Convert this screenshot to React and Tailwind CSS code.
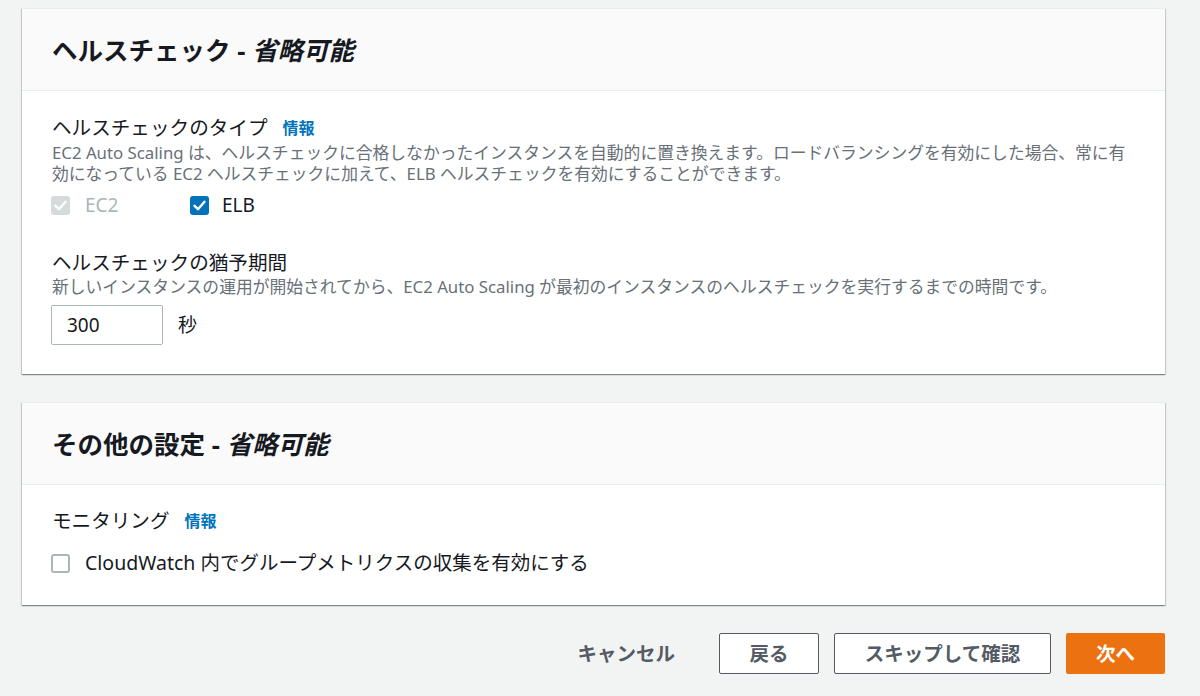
import React from 'react'

const cardShadow =
  'shadow-[0_1px_1px_0_rgba(0,28,36,0.3),1px_1px_1px_0_rgba(0,28,36,0.15),-1px_1px_1px_0_rgba(0,28,36,0.15)]'

function Check({ checked, disabled }) {
  if (!checked) {
    return <span className="w-[19px] h-[19px] rounded-[3px] border-2 border-[#aab7b8] bg-white shrink-0" />
  }
  return (
    <span
      className={`w-[19px] h-[19px] rounded-[3px] shrink-0 flex items-center justify-center ${
        disabled ? 'bg-[#d5dbdb]' : 'bg-[#0073bb]'
      }`}
    >
      <svg width="19" height="19" viewBox="0 0 19 19" fill="none">
        <polyline points="4.5,9.8 8,13.2 14.5,5.8" stroke="white" strokeWidth="2.4" strokeLinecap="round" strokeLinejoin="round" />
      </svg>
    </span>
  )
}

function Card({ title, children }) {
  return (
    <section className={`bg-white border-t border-[#eaeded] ${cardShadow}`}>
      <div className="h-[82px] bg-[#fafafa] border-b border-[#eaeded] px-[30px] flex items-center">
        <h2 className="text-[25.5px] font-bold text-[#16191f] leading-[30px]">
          {title} - <i>省略可能</i>
        </h2>
      </div>
      {children}
    </section>
  )
}

function Label({ children, info }) {
  return (
    <div className="flex items-center h-[24px]">
      <span className="text-[19.6px] text-[#16191f] leading-[24px]">{children}</span>
      {info && <a className="ml-[15px] text-[16px] font-bold text-[#0073bb] leading-[24px]">情報</a>}
    </div>
  )
}

export default function App() {
  return (
    <div className="min-h-[696px] bg-[#f2f3f3] pt-[8px] pl-[22px] pr-[35px] font-['Noto_Sans','Noto_Sans_CJK_JP',sans-serif]">
      <Card title="ヘルスチェック">
        <div className="px-[30px] pt-[25px] pb-[29px]">
          <Label info>ヘルスチェックのタイプ</Label>
          <div className="mt-[2px] text-[16.8px] leading-[21px] text-[#687078] whitespace-nowrap">
            <p>EC2 Auto Scaling は、ヘルスチェックに合格しなかったインスタンスを自動的に置き換えます。ロードバランシングを有効にした場合、常に有</p>
            <p>効になっている EC2 ヘルスチェックに加えて、ELB ヘルスチェックを有効にすることができます。</p>
          </div>
          <div className="mt-[9px] h-[24px] flex items-center -ml-[1px]">
            <div className="flex items-center w-[139px]">
              <Check checked disabled />
              <span className="ml-[15px] text-[19px] text-[#aab7b8]">EC2</span>
            </div>
            <div className="flex items-center">
              <Check checked />
              <span className="ml-[13px] text-[19px] text-[#16191f]">ELB</span>
            </div>
          </div>

          <div className="mt-[34px]">
            <Label>ヘルスチェックの猶予期間</Label>
          </div>
          <p className="mt-[2px] text-[16.8px] leading-[20px] text-[#687078] whitespace-nowrap">
            新しいインスタンスの運用が開始されてから、EC2 Auto Scaling が最初のインスタンスのヘルスチェックを実行するまでの時間です。
          </p>
          <div className="mt-[8px] flex items-center -ml-[1px]">
            <div className="w-[112px] h-[40px] border border-[#aab7b8] rounded-[2px] flex items-center pl-[15px] text-[19px] text-[#16191f]">
              300
            </div>
            <span className="ml-[15px] text-[19px] text-[#16191f]">秒</span>
          </div>
        </div>
      </Card>

      <div className="mt-[28px]">
        <Card title="その他の設定">
          <div className="px-[30px] pt-[24px] pb-[30px]">
            <Label info>モニタリング</Label>
            <div className="mt-[18px] h-[24px] flex items-center -ml-[1px]">
              <Check />
              <span className="ml-[15px] text-[19.5px] text-[#16191f]">CloudWatch 内でグループメトリクスの収集を有効にする</span>
            </div>
          </div>
        </Card>
      </div>

      <div className="mt-[28px] flex justify-end items-center gap-[15px]">
        <button className="h-[41px] px-[29px] text-[19.5px] font-bold text-[#545b64]">キャンセル</button>
        <button className="h-[41px] w-[100px] border border-[#545b64] rounded-[2px] bg-white text-[19.5px] font-bold text-[#545b64]">
          戻る
        </button>
        <button className="h-[41px] w-[217px] border border-[#545b64] rounded-[2px] bg-white text-[19.5px] font-bold text-[#545b64]">
          スキップして確認
        </button>
        <button className="h-[41px] w-[99px] rounded-[2px] bg-[#ec7211] text-[19.5px] font-bold text-white">次へ</button>
      </div>
    </div>
  )
}
